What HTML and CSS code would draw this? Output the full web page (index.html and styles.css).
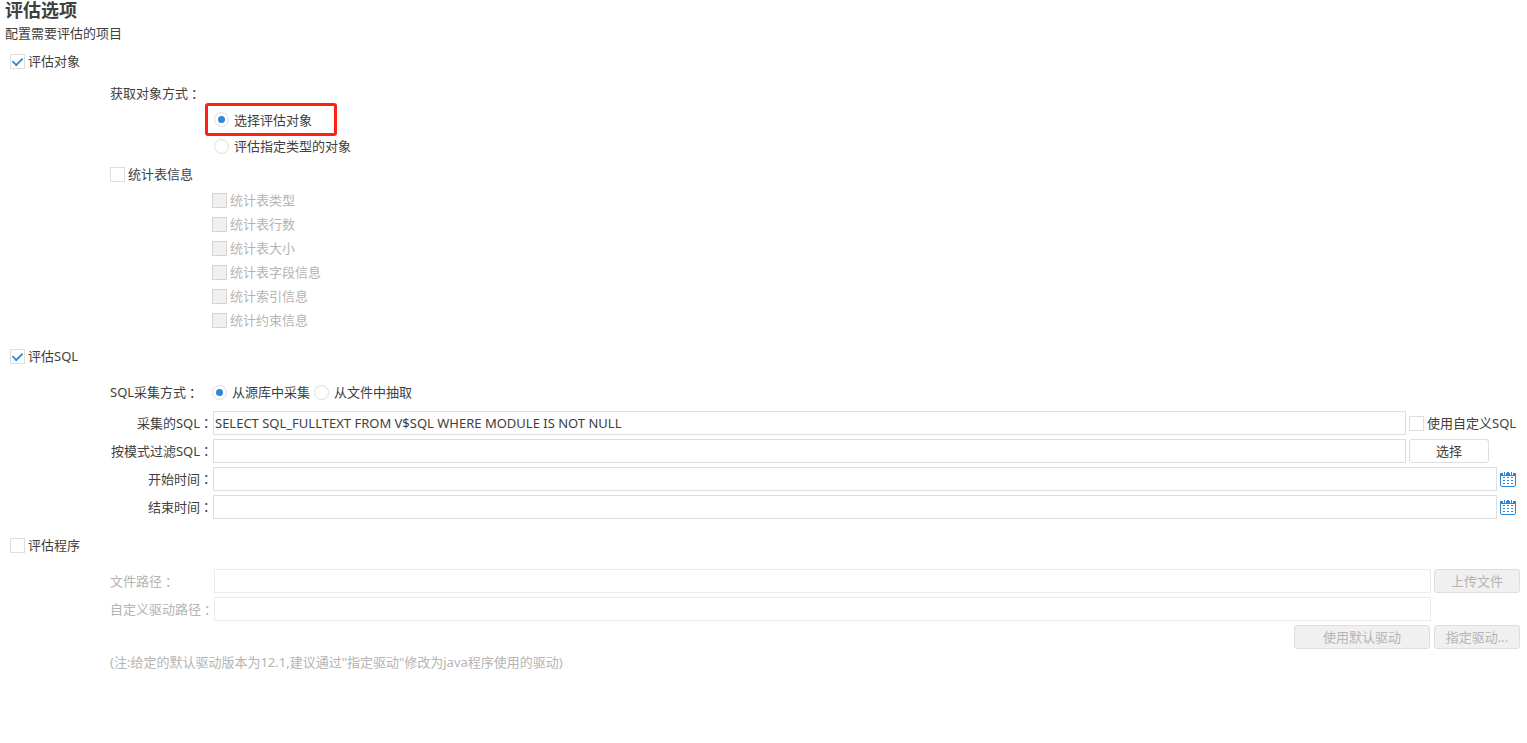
FILE: index.html
```html
<!DOCTYPE html>
<html lang="zh-CN">
<head>
    <meta charset="UTF-8">
    <meta name="viewport" content="width=device-width, initial-scale=1.0">
    <title>评估选项</title>
    <link rel="stylesheet" href="styles.css">
</head>
<body>
    <header class="page-header">
        <h1>评估选项</h1>
        <p>配置需要评估的项目</p>
    </header>

    <form>
        <section class="section">
            <label class="option section-title"><input type="checkbox" checked>评估对象</label>
            <div class="section-body">
                <p class="object-mode">获取对象方式<span class="colon">：</span></p>
                <div class="object-radios">
                    <label class="option radio highlighted"><input type="radio" name="objectMode" checked>选择评估对象</label>
                    <label class="option radio"><input type="radio" name="objectMode">评估指定类型的对象</label>
                </div>
                <label class="option stat-toggle"><input type="checkbox">统计表信息</label>
                <div class="stat-list">
                    <label class="option disabled"><input type="checkbox" disabled>统计表类型</label>
                    <label class="option disabled"><input type="checkbox" disabled>统计表行数</label>
                    <label class="option disabled"><input type="checkbox" disabled>统计表大小</label>
                    <label class="option disabled"><input type="checkbox" disabled>统计表字段信息</label>
                    <label class="option disabled"><input type="checkbox" disabled>统计索引信息</label>
                    <label class="option disabled"><input type="checkbox" disabled>统计约束信息</label>
                </div>
            </div>
        </section>

        <section class="section">
            <label class="option section-title"><input type="checkbox" checked>评估SQL</label>
            <div class="section-body sql-body">
                <div class="sql-mode">
                    <span class="sql-mode-label">SQL采集方式<span class="colon">：</span></span>
                    <label class="option radio"><input type="radio" name="sqlMode" checked>从源库中采集</label>
                    <label class="option radio"><input type="radio" name="sqlMode">从文件中抽取</label>
                </div>
                <div class="row">
                    <label class="row-label" for="sqlText">采集的SQL<span class="colon">：</span></label>
                    <input type="text" class="field" id="sqlText" value="SELECT SQL_FULLTEXT FROM V$SQL WHERE MODULE IS NOT NULL">
                    <div class="row-side">
                        <label class="option custom-sql"><input type="checkbox">使用自定义SQL</label>
                    </div>
                </div>
                <div class="row">
                    <label class="row-label" for="schema">按模式过滤SQL<span class="colon">：</span></label>
                    <input type="text" class="field" id="schema">
                    <div class="row-side">
                        <button type="button" class="btn btn-select">选择</button>
                    </div>
                </div>
                <div class="row">
                    <label class="row-label" for="startTime">开始时间<span class="colon">：</span></label>
                    <input type="text" class="field" id="startTime">
                    <button type="button" class="calendar-btn" aria-label="选择开始时间">
                        <svg width="16" height="16" viewBox="0 0 16 16" shape-rendering="crispEdges">
                            <path fill="#2f86d8" d="M0 2h3v2h3V2h4v2h3V2h3v13h-1v1H1v-1H0zM1 5v10h14V5z"/>
                            <path fill="#2f86d8" d="M4 1h1v3H4zM7 1h1v1H7zM8 1h1v1H8zM11 1h1v3h-1z"/>
                            <path fill="#2f86d8" d="M3 6h2v1H3zM7 6h2v1H7zM11 6h2v1h-2zM3 9h2v1H3zM7 9h2v1H7zM11 9h2v1h-2zM3 12h2v1H3zM7 12h2v1H7zM11 12h2v1h-2z"/>
                        </svg>
                    </button>
                </div>
                <div class="row">
                    <label class="row-label" for="endTime">结束时间<span class="colon">：</span></label>
                    <input type="text" class="field" id="endTime">
                    <button type="button" class="calendar-btn" aria-label="选择结束时间">
                        <svg width="16" height="16" viewBox="0 0 16 16" shape-rendering="crispEdges">
                            <path fill="#2f86d8" d="M0 2h3v2h3V2h4v2h3V2h3v13h-1v1H1v-1H0zM1 5v10h14V5z"/>
                            <path fill="#2f86d8" d="M4 1h1v3H4zM7 1h1v1H7zM8 1h1v1H8zM11 1h1v3h-1z"/>
                            <path fill="#2f86d8" d="M3 6h2v1H3zM7 6h2v1H7zM11 6h2v1h-2zM3 9h2v1H3zM7 9h2v1H7zM11 9h2v1h-2zM3 12h2v1H3zM7 12h2v1H7zM11 12h2v1h-2z"/>
                        </svg>
                    </button>
                </div>
            </div>
        </section>

        <section class="section">
            <label class="option section-title"><input type="checkbox">评估程序</label>
            <div class="section-body program-body disabled">
                <div class="row">
                    <label class="row-label" for="filePath">文件路径<span class="colon">：</span></label>
                    <input type="text" class="field" id="filePath" disabled>
                    <div class="row-side">
                        <button type="button" class="btn btn-file" disabled>上传文件</button>
                    </div>
                </div>
                <div class="row">
                    <label class="row-label" for="driverPath">自定义驱动路径<span class="colon">：</span></label>
                    <input type="text" class="field" id="driverPath" disabled>
                    <div class="row-side"></div>
                </div>
                <div class="driver-actions">
                    <button type="button" class="btn btn-default" disabled>使用默认驱动</button>
                    <button type="button" class="btn btn-file" disabled>指定驱动...</button>
                </div>
                <p class="note">(注:给定的默认驱动版本为12.1,建议通过"指定驱动"修改为java程序使用的驱动)</p>
            </div>
        </section>
    </form>
</body>
</html>
```

FILE: styles.css
```css
* {
    margin: 0;
    padding: 0;
    box-sizing: border-box;
}

body {
    font-family: "Noto Sans", "Noto Sans CJK SC", sans-serif;
    font-size: 13px;
    line-height: 20px;
    color: #404040;
    background: #fff;
}

input,
button {
    font: inherit;
    color: inherit;
}

.page-header {
    padding-left: 5px;
}

.page-header h1 {
    font-size: 18px;
    line-height: 20px;
}

.page-header p {
    margin-top: 3px;
}

.colon {
    display: inline-block;
    width: 13px;
    padding-left: 3px;
    font-family: "Noto Sans CJK SC", sans-serif;
    line-height: 18px;
}

.disabled {
    color: #b4b4b4;
}

/* checkboxes and radios */
.option {
    display: flex;
    align-items: center;
    gap: 3px;
    height: 20px;
    white-space: nowrap;
}

.option.radio {
    gap: 5px;
}

input[type="checkbox"],
input[type="radio"] {
    appearance: none;
    display: grid;
    place-items: center;
    flex: none;
    width: 15px;
    height: 15px;
    border: 1px solid #dedede;
    background: #fff;
}

input[type="radio"] {
    border-radius: 50%;
}

input[type="checkbox"]:checked::before {
    content: '';
    width: 9px;
    height: 5px;
    margin-bottom: 2px;
    border: solid #2f86d8;
    border-width: 0 0 2px 2px;
    transform: rotate(-45deg) scale(0.9);
}

input[type="radio"]:checked::before {
    content: '';
    width: 7px;
    height: 7px;
    border-radius: 50%;
    background: #2f86d8;
}

input[type="checkbox"]:disabled {
    background: #f0f0f0;
    border-color: #d4d4d4;
}

.section-title {
    margin-left: 10px;
}

.section-body {
    padding-left: 110px;
}

.section + .section {
    margin-top: 16px;
}

/* objects */
.page-header + form {
    padding-top: 8px;
}

.object-mode {
    margin-top: 12px;
}

.object-radios {
    display: flex;
    flex-direction: column;
    align-items: flex-start;
    margin-left: 95px;
}

.object-radios .option {
    padding-left: 9px;
}

.object-radios .highlighted {
    width: 132px;
    height: 33px;
    padding-left: 6px;
    border: 3px solid #fb2114;
    border-radius: 3px;
}

.stat-toggle {
    margin-top: 8px;
}

.stat-list {
    display: grid;
    gap: 4px;
    margin: 6px 0 0 102px;
}

/* sql */
.sql-mode {
    display: flex;
    gap: 4px;
    margin: 16px 0 9px;
}

.sql-mode-label {
    width: 98px;
}

.row {
    display: flex;
    align-items: center;
    gap: 3px;
    height: 24px;
    margin-bottom: 4px;
}

.row-label {
    width: 100px;
    white-space: nowrap;
}

.field {
    flex: 1;
    min-width: 0;
    height: 24px;
    padding: 0 1px;
    border: 1px solid #dedede;
    background: #fff;
}

.field:disabled {
    border-color: #ebebeb;
}

.sql-body {
    padding-right: 11px;
}

.sql-body .row-label {
    display: flex;
    justify-content: flex-end;
    width: 103px;
    margin-right: -3px;
}

.sql-body .row-side {
    width: 107px;
}

.btn {
    height: 24px;
    border: 1px solid #dedede;
    border-radius: 3px;
    background: #fff;
}

.btn:disabled {
    background: #f0f0f0;
}

.btn-select {
    width: 80px;
}

.calendar-btn {
    width: 16px;
    height: 16px;
    border: none;
    background: none;
}

.calendar-btn svg {
    display: block;
}

/* program */
.program-body {
    padding-right: 7px;
    padding-top: 14px;
}

.program-body .row-label {
    width: 101px;
}

.program-body .row-side {
    width: 86px;
}

.btn-file {
    width: 86px;
}

.btn-default {
    width: 136px;
}

.driver-actions {
    display: flex;
    justify-content: flex-end;
    gap: 4px;
}

.note {
    margin-top: 3px;
}
```
